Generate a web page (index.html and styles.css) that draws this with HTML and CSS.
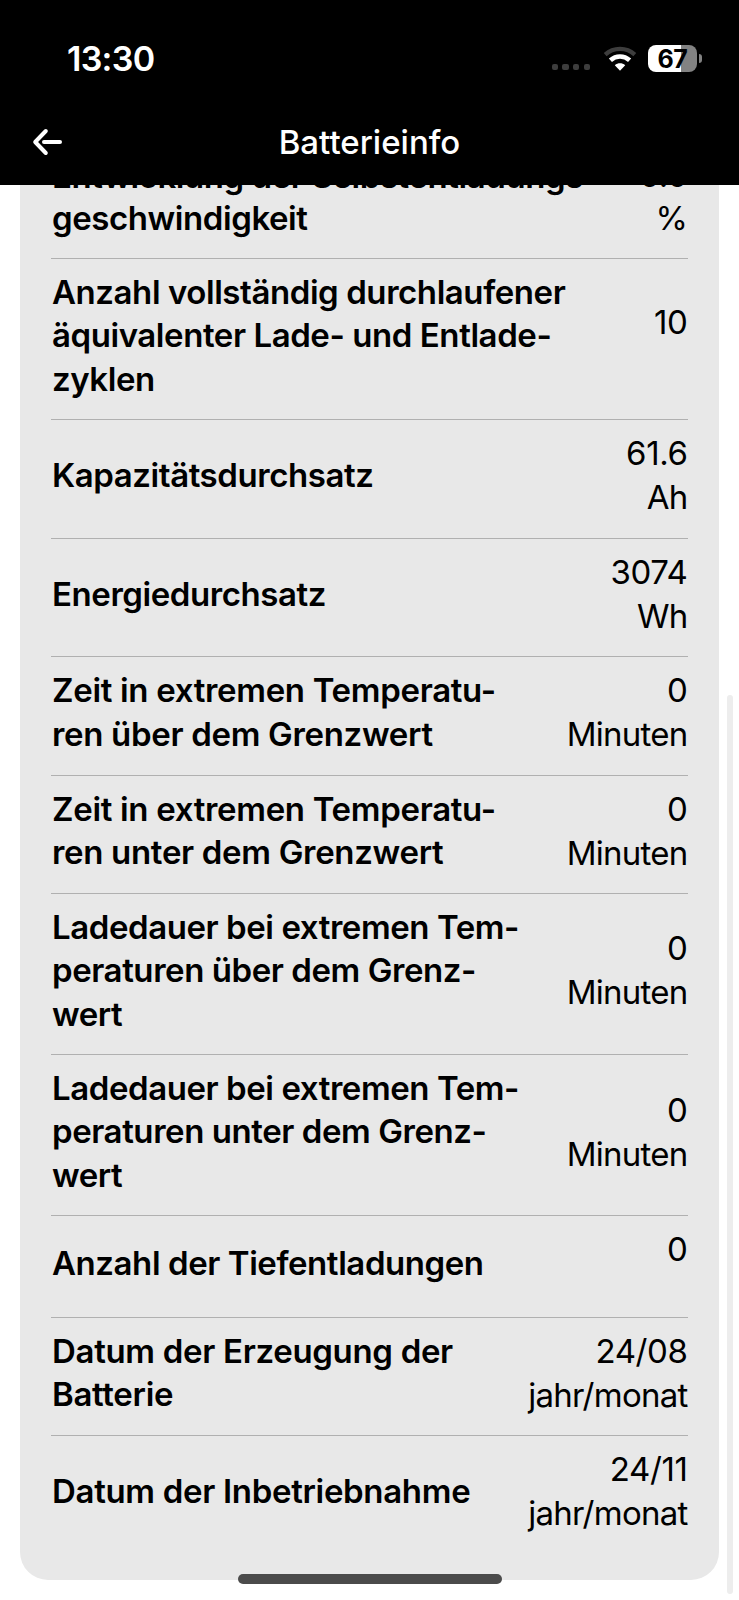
FILE: index.html
```
<!DOCTYPE html>
<html lang="de">
<head>
<meta charset="utf-8">
<title>Batterieinfo</title>
<link rel="stylesheet" href="styles.css">
</head>
<body>
<div class="screen">
  <header class="top">
    <div class="status">
      <span class="time">13:30</span>
      <div class="indicators">
        <div class="dots"><i></i><i></i><i></i><i></i></div>
        <svg class="wifi" width="34" height="26" viewBox="0 0 34 26" fill="none">
          <path d="M2.200 8.600C10.500 .9 23.500 .9 31.800 8.600" stroke="#3d3d3d" stroke-width="4.200"/>
          <path d="M7.400 14.300C13 9.200 21 9.200 26.600 14.300" stroke="#fff" stroke-width="4.600"/>
          <path d="M11.800 19.200C14.900 16.600 19.100 16.600 22.200 19.200L17 24.800Z" fill="#fff"/>
        </svg>
        <div class="battery"><span class="level">67</span><i class="cap"></i></div>
      </div>
    </div>
    <div class="nav">
      <svg class="back" width="30" height="28" viewBox="0 0 30 28" fill="none" stroke="#fff" stroke-width="4" stroke-linecap="round" stroke-linejoin="round">
        <path d="M13.800 3L3.200 14L13.800 25"/><path d="M12 14H28"/>
      </svg>
      <h1 class="title">Batterieinfo</h1>
    </div>
  </header>
  <main class="scroll">
    <div class="card">
      <div class="row first"><div class="label"><span>Entwicklung der Selbstentladungs</span><span>geschwindigkeit</span></div><div class="value"><span>0.0</span><span>%</span></div></div>
      <div class="row"><div class="label"><span>Anzahl vollständig durchlaufener</span><span>äquivalenter Lade- und Entlade-</span><span>zyklen</span></div><div class="value unitless"><span>10</span></div></div>
      <div class="row"><div class="label"><span>Kapazitätsdurchsatz</span></div><div class="value"><span>61.6</span><span class="unit">Ah</span></div></div>
      <div class="row"><div class="label"><span>Energiedurchsatz</span></div><div class="value"><span>3074</span><span class="unit">Wh</span></div></div>
      <div class="row loose"><div class="label"><span>Zeit in extremen Temperatu-</span><span>ren über dem Grenzwert</span></div><div class="value"><span>0</span><span class="unit">Minuten</span></div></div>
      <div class="row loose"><div class="label"><span>Zeit in extremen Temperatu-</span><span>ren unter dem Grenzwert</span></div><div class="value"><span>0</span><span class="unit">Minuten</span></div></div>
      <div class="row"><div class="label"><span>Ladedauer bei extremen Tem-</span><span>peraturen über dem Grenz-</span><span>wert</span></div><div class="value"><span>0</span><span class="unit">Minuten</span></div></div>
      <div class="row"><div class="label"><span>Ladedauer bei extremen Tem-</span><span>peraturen unter dem Grenz-</span><span>wert</span></div><div class="value"><span>0</span><span class="unit">Minuten</span></div></div>
      <div class="row"><div class="label"><span>Anzahl der Tiefentladungen</span></div><div class="value unitless"><span>0</span></div></div>
      <div class="row loose"><div class="label"><span>Datum der Erzeugung der</span><span>Batterie</span></div><div class="value"><span>24/08</span><span class="unit">jahr/monat</span></div></div>
      <div class="row loose"><div class="label"><span>Datum der Inbetriebnahme</span></div><div class="value"><span>24/11</span><span class="unit">jahr/monat</span></div></div>
    </div>
  </main>
  <div class="scrollbar"></div>
  <div class="home"></div>
</div>
</body>
</html>
```
FILE: styles.css
```
* { box-sizing: border-box; }
body { margin: 0; background: #fff; color: #000; font-family: Inter, "Liberation Sans", sans-serif; }
.screen { position: relative; width: 739px; height: 1600px; display: flex; flex-direction: column; overflow: hidden; }
.top { flex: none; height: 185px; background: #000; color: #fff; }
.status { height: 100px; padding: 17px 37px 0 67px; display: flex; align-items: center; justify-content: space-between; }
.time { font-size: 34px; font-weight: 600; line-height: 40px; letter-spacing: -.7px; }
.indicators { display: flex; align-items: center; }
.dots { display: flex; gap: 4.500px; margin: 17px 12.500px 0 0; }
.dots i { width: 6.200px; height: 6.200px; border-radius: 2px; background: #3d3d3d; }
.wifi { margin-right: 11.500px; }
.battery { position: relative; width: 49px; height: 27px; margin-right: 5px; border-radius: 8px; background: linear-gradient(90deg, #fff 33px, #828282 33px); color: #000; text-align: center; }
.level { font-size: 25px; font-weight: 700; line-height: 28px; letter-spacing: -.3px; display: block; }
.cap { position: absolute; left: 50.500px; top: 9px; width: 3.500px; height: 9px; border-radius: 0 4px 4px 0; background: #828282; }
.nav { height: 83px; padding: 0 32px; display: grid; grid-template-columns: 30px 1fr 30px; align-items: center; }
.title { margin: 0; font-size: 33px; font-weight: 500; line-height: 40px; text-align: center; }
.scroll { flex: 1; min-height: 0; padding: 0 20px 20px 20px; display: flex; flex-direction: column; justify-content: flex-end; overflow: hidden; }
.card { flex: none; background: #e8e8e8; border-radius: 28px; padding: 0 31px 26.500px; }
.row { display: flex; justify-content: space-between; align-items: center; padding: 11px 0 18.400px; border-bottom: 1px solid #b0b0b0; }
.row:last-child { border-bottom: 0; }
.label { margin: .6px 0 -.6px; padding-left: 1px; font-size: 33px; font-weight: 600; line-height: 43.600px; letter-spacing: -.43px; white-space: nowrap; }
.loose .label { letter-spacing: -.32px; }
.label span, .value span { display: block; }
.value { padding-right: .5px; font-size: 33px; font-weight: 400; line-height: 44px; letter-spacing: -.4px; text-align: right; white-space: nowrap; }
.unit { letter-spacing: -.75px; }
.unitless { padding-bottom: 27px; }
.first .label { line-height: 42px; }
.first .value { line-height: 43px; }
.scrollbar { position: absolute; left: 727px; top: 695px; width: 6px; height: 899px; border-radius: 3px; background: #ededed; }
.home { position: absolute; left: 238px; top: 1574px; width: 264px; height: 10px; border-radius: 5px; background: #4b4b4b; }
```
